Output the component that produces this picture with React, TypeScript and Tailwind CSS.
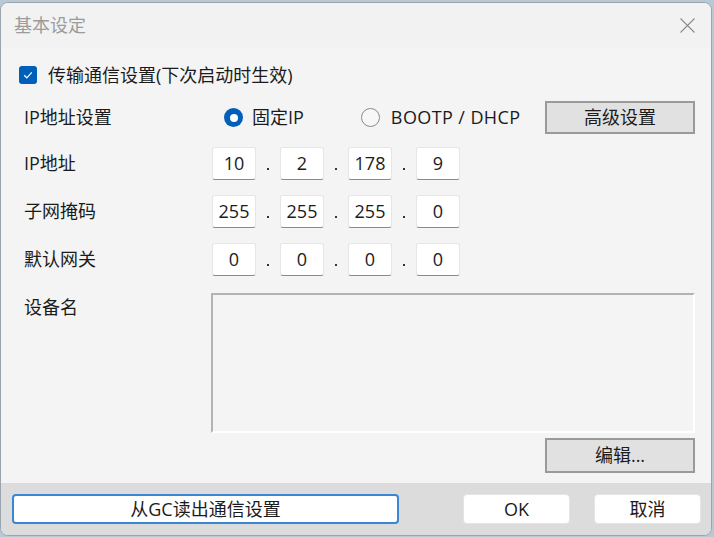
import React from "react";

const FONT = { fontFamily: '"Open Sans", "Noto Sans CJK SC", sans-serif' };

function IpBox({ v }: { v: string }) {
  return (
    <div className="w-[44px] h-[33px] bg-white border border-[#e6e6e6] border-b-[#8a8a8a] rounded-[3px] flex items-center justify-center text-[18px] text-[#1b1b1b]">
      {v}
    </div>
  );
}

function IpRow({ label, vals }: { label: string; vals: string[] }) {
  return (
    <div className="flex items-center">
      <div className="w-[188px] text-[18px] text-[#1b1b1b]">{label}</div>
      <div className="flex items-center">
        {vals.map((v, i) => (
          <React.Fragment key={i}>
            {i > 0 && (
              <div className="w-[24px] h-[33px] flex justify-center items-end pb-[10px]">
                <div className="w-[2px] h-[2px] bg-[#333]" />
              </div>
            )}
            <IpBox v={v} />
          </React.Fragment>
        ))}
      </div>
    </div>
  );
}

export default function App() {
  return (
    <div className="w-[714px] h-[537px] bg-[#b9c8d5] pt-[2px] pr-[2px] pb-[1px] overflow-hidden" style={FONT}>
      <div className="w-full h-full flex flex-col rounded-[8px] border border-[#9aa4ad] overflow-hidden bg-[#f2f2f2]">
        {/* Title bar */}
        <div className="h-[45px] flex items-center justify-between pl-[13px] pr-[16px] bg-[#f2f2f2]">
          <span className="text-[18px] text-[#9b9b9b]">基本设定</span>
          <svg width="15" height="15" viewBox="0 0 15 15">
            <path d="M0.5 0.5 L14.5 14.5 M14.5 0.5 L0.5 14.5" stroke="#8a8a8a" strokeWidth="1.1" fill="none" />
          </svg>
        </div>
        {/* Content */}
        <div className="flex-1 bg-[#f4f4f4] pl-[23px] pr-[16px] pt-[18px] flex flex-col">
          <div className="flex items-center h-[18px] -ml-[5px]">
            <div className="w-[18px] h-[18px] rounded-[3px] bg-[#005fb8] flex items-center justify-center">
              <svg width="12" height="12" viewBox="0 0 12 12">
                <path d="M2.2 6.3 L4.8 8.8 L9.8 3.4" stroke="white" strokeWidth="1.2" fill="none" />
              </svg>
            </div>
            <span className="ml-[11px] text-[18px] text-[#1b1b1b]">传输通信设置(下次启动时生效)</span>
          </div>

          <div className="flex items-center mt-[17px] h-[33px]">
            <div className="w-[200px] text-[18px] text-[#1b1b1b]">IP地址设置</div>
            <div className="w-[19px] h-[19px] rounded-full bg-[#005fb8] flex items-center justify-center">
              <div className="w-[8px] h-[8px] rounded-full bg-white" />
            </div>
            <span className="ml-[9px] text-[18px] text-[#1b1b1b]">固定IP</span>
            <div className="ml-[57px] w-[19px] h-[19px] rounded-full border border-[#8a8a8a] bg-[#f7f7f7]" />
            <span className="ml-[11px] text-[18px] text-[#1b1b1b] tracking-[0.4px]">BOOTP / DHCP</span>
            <div className="ml-auto w-[150px] h-[33px] bg-[#e1e1e1] border-2 border-[#9a9a9a] flex items-center justify-center text-[18px] text-[#1b1b1b]">
              高级设置
            </div>
          </div>

          <div className="mt-[13px]">
            <IpRow label="IP地址" vals={["10", "2", "178", "9"]} />
          </div>
          <div className="mt-[15px]">
            <IpRow label="子网掩码" vals={["255", "255", "255", "0"]} />
          </div>
          <div className="mt-[15px]">
            <IpRow label="默认网关" vals={["0", "0", "0", "0"]} />
          </div>

          <div className="flex mt-[17px]">
            <div className="w-[187px] text-[18px] text-[#1b1b1b] pt-[1px]">设备名</div>
            <div className="flex-1 h-[140px] border-2 border-t-[#b3b3b3] border-l-[#b3b3b3] border-b-white border-r-white bg-[#f4f4f4]" />
          </div>

          <div className="flex justify-end mt-[5px]">
            <div className="w-[150px] h-[35px] bg-[#e1e1e1] border-2 border-[#9a9a9a] flex items-center justify-center text-[18px] text-[#1b1b1b]">
              编辑...
            </div>
          </div>
        </div>
        {/* Footer */}
        <div className="h-[52px] bg-[#dcdcdc] flex items-start pt-[11px] pl-[11px] pr-[10px]">
          <div className="w-[387px] h-[30px] bg-white border-2 border-[#3a86d6] rounded-[4px] flex items-center justify-center text-[18px] text-[#1b1b1b]">
            从GC读出通信设置
          </div>
          <div className="ml-auto w-[107px] h-[30px] bg-white border border-[#e4e4e4] rounded-[4px] flex items-center justify-center text-[18px] text-[#1b1b1b]">
            OK
          </div>
          <div className="ml-[24px] w-[107px] h-[30px] bg-white border border-[#e4e4e4] rounded-[4px] flex items-center justify-center text-[18px] text-[#1b1b1b]">
            取消
          </div>
        </div>
      </div>
    </div>
  );
}
